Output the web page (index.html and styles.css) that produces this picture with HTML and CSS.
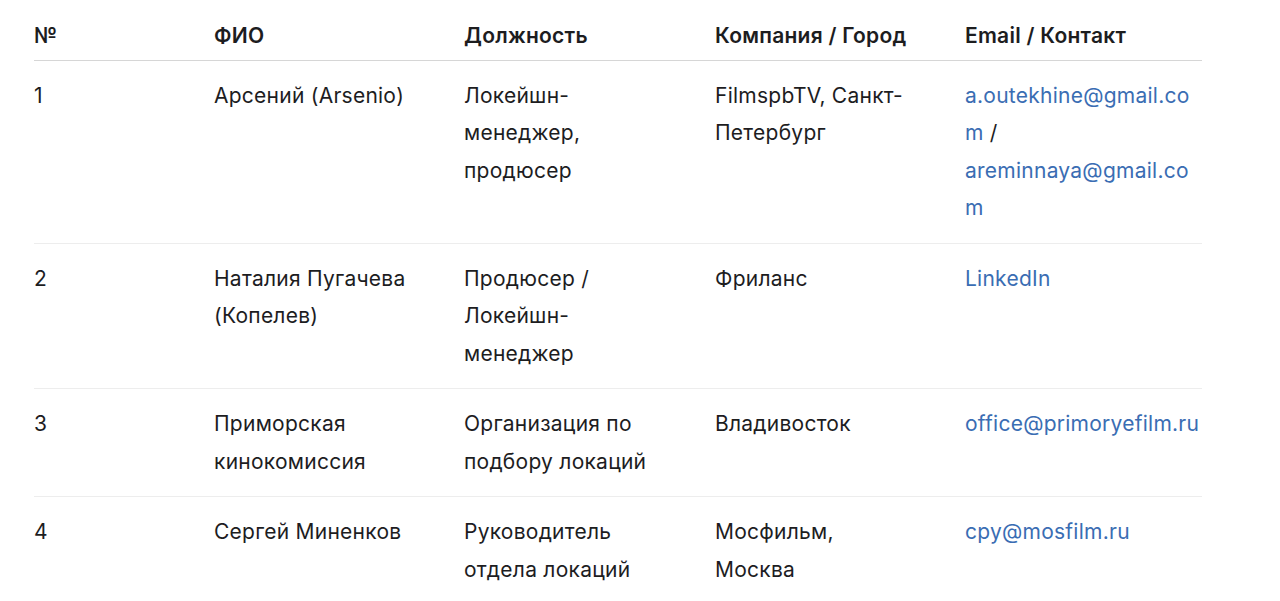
FILE: index.html
```html
<!DOCTYPE html>
<html lang="ru">
<head>
<meta charset="utf-8">
<title>Контакты</title>
<link rel="stylesheet" href="styles.css">
</head>
<body>
<table class="contacts">
  <colgroup>
    <col class="c-num"><col class="c-name"><col class="c-pos"><col class="c-comp"><col class="c-mail">
  </colgroup>
  <thead>
    <tr><th>№</th><th>ФИО</th><th>Должность</th><th>Компания / Город</th><th>Email / Контакт</th></tr>
  </thead>
  <tbody>
    <tr>
      <td>1</td>
      <td>Арсений (Arsenio)</td>
      <td>Локейшн-менеджер, продюсер</td>
      <td class="comp">FilmspbTV, Санкт-Петербург</td>
      <td><a href="#">a.outekhine@gmail.com</a> / <a href="#">areminnaya@gmail.com</a></td>
    </tr>
    <tr>
      <td>2</td>
      <td>Наталия Пугачева (Копелев)</td>
      <td>Продюсер / Локейшн-менеджер</td>
      <td class="comp">Фриланс</td>
      <td><a href="#">LinkedIn</a></td>
    </tr>
    <tr>
      <td>3</td>
      <td>Приморская кинокомиссия</td>
      <td>Организация по подбору локаций</td>
      <td class="comp">Владивосток</td>
      <td><a href="#">office@primoryefilm.ru</a></td>
    </tr>
    <tr>
      <td>4</td>
      <td>Сергей Миненков</td>
      <td>Руководитель отдела локаций</td>
      <td class="comp">Мосфильм, Москва</td>
      <td><a href="#">cpy@mosfilm.ru</a></td>
    </tr>
  </tbody>
</table>
</body>
</html>
```
FILE: styles.css
```css
html, body {
  margin: 0;
  background: #ffffff;
}
body {
  font-family: Inter, "Noto Sans", sans-serif;
  font-size: 21px;
  letter-spacing: 0.25px;
  color: #1d1d1f;
  padding: 0 0 0 34px;
}
.contacts {
  border-collapse: collapse;
  table-layout: fixed;
  width: 1168px;
}
.c-num { width: 180px; }
.c-name { width: 250px; }
.c-pos { width: 251px; }
.c-comp { width: 250px; }
.c-mail { width: 237px; }
.contacts th {
  text-align: left;
  font-weight: 600;
  line-height: 37.5px;
  padding: 17px 40px 5px 0;
  border-bottom: 1px solid #d6d6d6;
  vertical-align: top;
}
.contacts td {
  line-height: 37.5px;
  padding: 16px 40px 16px 0;
  vertical-align: top;
  border-bottom: 1px solid #ededed;
  overflow-wrap: anywhere;
}
.contacts td.comp {
  padding-right: 52px;
}
.contacts td:last-child,
.contacts th:last-child {
  padding-right: 0;
}
.contacts a {
  color: #3a6db3;
  text-decoration: none;
}
```
